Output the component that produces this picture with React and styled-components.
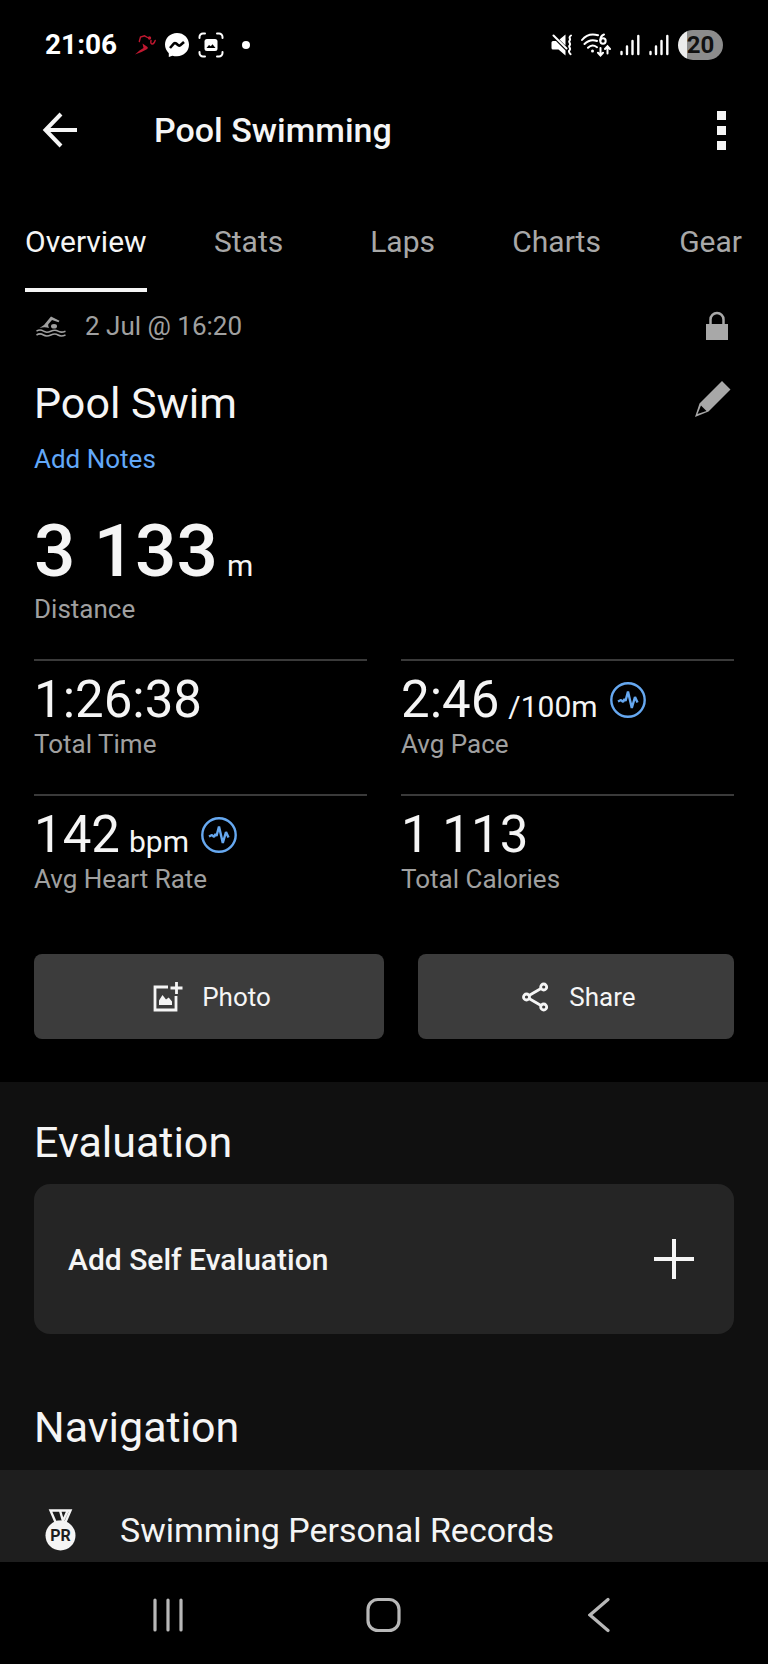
import React, { useState } from "react";
import styled, { createGlobalStyle } from "styled-components";

const GlobalStyle = createGlobalStyle`
  * {
    box-sizing: border-box;
  }

  body {
    margin: 0;
    background: #000;
    color: #f5f5f5;
    font-family: Roboto, "Liberation Sans", sans-serif;
  }

  button {
    padding: 0;
    border: none;
    background: none;
    color: inherit;
    font-family: inherit;
    cursor: pointer;
  }

  svg {
    display: block;
    flex: none;
  }
`;

const Screen = styled.div`
  display: flex;
  flex-direction: column;
  height: 100vh;
`;

const StatusBar = styled.div`
  display: flex;
  flex: none;
  align-items: center;
  justify-content: space-between;
  height: 90px;
  padding: 0 45px;
`;

const StatusGroup = styled.div`
  display: flex;
  align-items: center;
  gap: 9px;
`;

const Clock = styled.span`
  margin-right: 8px;
  font-size: 28px;
  font-weight: 700;
  line-height: 32px;
  color: #fff;
`;

const Dot = styled.span`
  width: 8px;
  height: 8px;
  margin-left: 9px;
  border-radius: 50%;
  background: #fff;
`;

const Battery = styled.span`
  width: 45px;
  height: 30px;
  border-radius: 15px;
  background: linear-gradient(to right, #ececec 20%, #8c8c8c 20%);
  color: #111;
  font-size: 24px;
  font-weight: 700;
  line-height: 30px;
  text-align: center;
`;

const AppBar = styled.header`
  display: flex;
  flex: none;
  align-items: center;
  height: 80px;
  padding: 0 41px 0 42px;
`;

const AppTitle = styled.h1`
  flex: 1;
  margin: 0 0 0 76px;
  font-size: 34px;
  font-weight: 500;
  line-height: 40px;
`;

const Tabs = styled.nav`
  display: flex;
  flex: none;
  height: 122px;
  padding-top: 26px;
  overflow: hidden;
`;

const Tab = styled.button`
  flex: none;
  min-width: 154px;
  padding: 0 25px;
  font-size: 30px;
  color: ${(props) => (props.$active ? "#f5f5f5" : "#a8a8a8")};
`;

const TabLabel = styled.span`
  display: inline-block;
  border-bottom: 4px solid ${(props) => (props.$active ? "#f5f5f5" : "transparent")};
  line-height: 92px;
`;

const Content = styled.main`
  flex: 1;
  min-height: 0;
  overflow: auto;
  scrollbar-width: none;
`;

const Summary = styled.section`
  padding: 14px 34px 43px;
`;

const Row = styled.div`
  display: flex;
  align-items: center;
  justify-content: space-between;
`;

const DateText = styled.div`
  display: flex;
  align-items: center;
  gap: 19px;
  padding-left: 2px;
  font-size: 26px;
  line-height: 40px;
  color: #a0a0a0;
`;

const TitleRow = styled(Row)`
  margin-top: 17px;
`;

const IconButton = styled.button`
  padding: 0 ${(props) => props.$inset || 0}px;
`;

const ActivityName = styled.h2`
  margin: 0;
  padding-top: 8px;
  font-size: 43px;
  font-weight: 400;
  line-height: 64px;
`;

const NotesLink = styled.a`
  display: block;
  width: max-content;
  margin-top: 8px;
  font-size: 26px;
  line-height: 32px;
  color: #62a8f8;
  text-decoration: none;
`;

const Stats = styled.dl`
  display: grid;
  grid-template-columns: 1fr 1fr;
  gap: 34px;
  margin: 0;
`;

const Stat = styled.div`
  display: flex;
  flex-direction: column-reverse;
  border-top: 2px solid #3a3a3a;
  padding-top: 11px;
`;

const MainStat = styled(Stat)`
  grid-column: 1 / -1;
  padding-top: 34px;
  border-top: none;
`;

const StatLabel = styled.dt`
  font-size: 26px;
  line-height: 32px;
  color: #a0a0a0;
`;

const StatValue = styled.dd`
  display: flex;
  align-items: baseline;
  height: ${(props) => (props.$main ? 84 : 56)}px;
  margin: 0;
  font-size: ${(props) => (props.$main ? 73 : 51)}px;
  font-weight: ${(props) => (props.$main ? 500 : 400)};
  line-height: ${(props) => (props.$main ? 84 : 56)}px;

  svg {
    align-self: center;
  }
`;

const Unit = styled.span`
  margin: 0 12px 0 9px;
  font-size: 30px;
  font-weight: 400;
  line-height: 32px;
`;

const Actions = styled.div`
  display: grid;
  grid-template-columns: 1fr 1fr;
  margin-top: 59px;
`;

const ActionButton = styled.button`
  display: flex;
  align-items: center;
  justify-content: center;
  gap: 19px;
  height: 85px;
  padding-left: 6px;
  border-radius: 8px;
  background: #3c3c3c;
  font-size: 26px;
  line-height: 32px;

  & + & {
    margin-left: 34px;
  }
`;

const Details = styled.section`
  padding-top: 28px;
  background: #101010;
`;

const SectionTitle = styled.h2`
  margin: 0;
  padding: 0 34px;
  font-size: 43px;
  font-weight: 400;
  line-height: 64px;
`;

const EvaluationCard = styled.button`
  display: flex;
  align-items: center;
  justify-content: space-between;
  width: calc(100% - 68px);
  height: 150px;
  margin: 10px 34px 61px;
  padding: 0 40px 0 34px;
  border-radius: 16px;
  background: #252525;
  font-size: 30px;
  font-weight: 500;
`;

const RecordsLink = styled.a`
  display: flex;
  align-items: center;
  gap: 44px;
  height: 120px;
  margin-top: 11px;
  padding: 0 45px;
  background: #1e1e1e;
  color: #f5f5f5;
  font-size: 34px;
  line-height: 40px;
  text-decoration: none;
`;

const SystemNav = styled.nav`
  display: grid;
  flex: none;
  grid-template-columns: repeat(3, 1fr);
  height: 102px;
  padding: 4px 8% 0;
`;

const SystemButton = styled.button`
  display: flex;
  align-items: center;
  justify-content: center;
`;

const RunnerIcon = () => (
  <svg width="22" height="22" viewBox="0 0 22 22" fill="#c01830">
    <path
      d="M5.300 7.500 6.500 3l4-1.200 3 1.700M17 6.500c-.5 2.500 0 3.500 1.500 3.500s2-1.500 2.700-3.500"
      fill="none"
      stroke="#c01830"
      strokeWidth="1.400"
      strokeLinecap="round"
    />
    <circle cx="15.500" cy="4" r="1.700" />
    <path d="m8.500 9.500 5 3.500c.6.700.2 1.700-.7 2.300L7.500 18 1 20.500l4.500-4 4-2.500Z" />
  </svg>
);

const MessengerIcon = () => (
  <svg width="24" height="24" viewBox="0 0 24 24">
    <path
      fill="#fff"
      d="M12 0C5.200 0 0 5 0 11.600c0 3.500 1.400 6.500 3.800 8.600V24l3.600-1.300c1.400.4 3 .6 4.600.6 6.800 0 12-5 12-11.700S18.800 0 12 0Z"
    />
    <path fill="none" stroke="#000" strokeWidth="2.600" d="m5 15 4-4.500c.6-.6 1.300-.6 2-.1l2.300 1.900c.7.500 1.300.5 2 0L19 9" />
  </svg>
);

const CaptureIcon = () => (
  <svg width="26" height="26" viewBox="0 0 26 26" fill="none" stroke="#fff" strokeWidth="2" strokeLinecap="round">
    <path d="M1.500 6V5a3.500 3.500 0 0 1 3.500-3.500h2M19 1.500h2A3.500 3.500 0 0 1 24.500 5v1M24.500 20v1a3.500 3.500 0 0 1-3.500 3.500h-2M7 24.500H5A3.500 3.500 0 0 1 1.500 21v-1" />
    <rect x="6.500" y="7" width="13" height="12" rx="2.500" fill="#fff" stroke="none" />
    <path d="m8.500 16 2.500-3 1.800 1.200 1.700-2 3 3.800Z" fill="#000" stroke="none" />
  </svg>
);

const MuteIcon = () => (
  <svg width="21" height="22" viewBox="0 0 21 22" fill="#fff">
    <path d="M2 7h3l9.500 9.500v5L7.500 15.500H2A1.500 1.500 0 0 1 .5 14V8.500A1.500 1.500 0 0 1 2 7ZM8.500 5.500l6-5v11Z" />
    <path
      d="m2.500 1.500 13 13M20 1.500c-3.500 2 .5 3.300-1.500 5.300-1.500 1.300 2 2.700 0 4.700-1.500 1.300 2 2.700 0 4.700-1.500 1.300 0 2.800 1 4"
      fill="none"
      stroke="#fff"
      strokeWidth="2"
      strokeLinecap="round"
    />
  </svg>
);

const WifiIcon = () => (
  <svg width="30" height="24" viewBox="1 0 30 24" fill="none" stroke="#fff" strokeWidth="2" strokeLinecap="round">
    <path d="M2 7C6 2 12 .5 18 2.200M4.500 11c4-4 8.500-4.500 12.500-3M8 14.700c2.500-2.500 6-2.700 9-.5" />
    <circle cx="12.500" cy="18" r="1.500" fill="#fff" stroke="none" />
    <circle cx="23" cy="8" r="2.700" />
    <path d="M24 1.500c-2.500 1-3.700 3.500-3.700 6M20.500 15v7M18 19.800l2.500 2.700 2.500-2.700M27.500 20.500v-7M25 16l2.500-2.700L30 16" />
  </svg>
);

const SignalIcon = () => (
  <svg width="20" height="22" viewBox="0 0 20 22" stroke="#fff" strokeWidth="2.400" strokeLinecap="round">
    <path d="M1.500 18v2M7 12.500V20M12.500 7v13M18.300 2v18" />
  </svg>
);

const BackIcon = () => (
  <svg width="36" height="36" viewBox="0 0 36 36" fill="none" stroke="#f5f5f5" strokeWidth="4">
    <path d="M19 2 3.500 18 19 34M3.500 18H35" />
  </svg>
);

const MoreIcon = () => (
  <svg width="12" height="39" viewBox="0 0 12 39" fill="#f5f5f5">
    <path d="M2 0h9v9H2zM2 15h9v9H2zM2 30h9v9H2z" />
  </svg>
);

const SwimIcon = () => (
  <svg width="30" height="22" viewBox="0 0 30 22" fill="#a0a0a0">
    <path d="M3.500 13 8 10l7-8.500 8.500 4.300-1 1.500-6.500-2.300-3.500 4c-.8 1 0 2.500.5 4-3-1-6-1-9.500 0Z" />
    <ellipse cx="18" cy="11.200" rx="3" ry="2.300" />
    <path
      d="M.5 16.200c2.500-1.600 4.500-1.600 7 0s5 1 7.300 0 4.700-1.600 7.200 0 5 1 7.500 0M.5 20c2.500-1.600 4.500-1.600 7 0s5 1 7.300 0 4.700-1.600 7.200 0 5 1 7.500 0"
      fill="none"
      stroke="#a0a0a0"
      strokeWidth="1.500"
    />
  </svg>
);

const LockIcon = () => (
  <svg width="24" height="30" viewBox="0 0 24 30">
    <path d="M1 13h22v16H1z" fill="#a8a8a8" />
    <path d="M5.500 14V8.500a6.500 6.500 0 0 1 13 0V14" fill="none" stroke="#a8a8a8" strokeWidth="2.500" />
  </svg>
);

const PencilIcon = () => (
  <svg width="36" height="36" viewBox="0 0 36 36" fill="#a8a8a8" fillRule="evenodd">
    <path d="m27 0 8.500 8.500-22 22L0 36l4.500-13.500ZM6 24.500 2.500 33l9-3Z" />
  </svg>
);

const PulseIcon = () => (
  <svg width="36" height="36" viewBox="0 0 36 36" fill="none" stroke="#66a8f0" strokeWidth="2.400">
    <circle cx="18" cy="18" r="16.700" />
    <path d="m8 19.500 3-1.500 2 2 1.500-3 1 2L18 9.500l3.800 16.500 3.200-11 2.500 5.500" strokeLinejoin="bevel" />
  </svg>
);

const PhotoIcon = () => (
  <svg width="30" height="30" viewBox="0 0 30 30" fill="#f5f5f5">
    <path d="M15 5H2v23h21V14M23.500 0v12M17.500 6h12" fill="none" stroke="#f5f5f5" strokeWidth="2.800" />
    <path d="M6 23v-4.500l3.500-5.500 3.500 4.500 2.700-2L19 19.500V23Z" />
  </svg>
);

const ShareIcon = () => (
  <svg width="28" height="30" viewBox="0 0 28 30" fill="none" stroke="#f5f5f5" strokeWidth="2.800">
    <circle cx="4.500" cy="15" r="3" />
    <circle cx="21.700" cy="5" r="3" />
    <circle cx="21.700" cy="25" r="3" />
    <path d="m7 13.500 12-7M7 16.500l12 7" />
  </svg>
);

const PlusIcon = () => (
  <svg width="40" height="40" viewBox="0 0 40 40" stroke="#f5f5f5" strokeWidth="4">
    <path d="M20 0v40M0 20h40" />
  </svg>
);

const MedalIcon = () => (
  <svg width="31" height="42" viewBox="0 0 31 42">
    <path d="M5.500 1.500h20L20.500 13h-10ZM15 1.500 18 12M18 12l4.500-10" fill="none" stroke="#f5f5f5" strokeWidth="2.400" />
    <circle cx="15.500" cy="26.500" r="15" fill="#f5f5f5" />
    <text x="15.500" y="32" textAnchor="middle" fontSize="16" fontWeight="700" fill="#1e1e1e">
      PR
    </text>
  </svg>
);

const tabs = ["Overview", "Stats", "Laps", "Charts", "Gear"];

const stats = [
  { label: "Distance", value: "3 133", unit: "m", main: true },
  { label: "Total Time", value: "1:26:38" },
  { label: "Avg Pace", value: "2:46", unit: "/100m", zones: true },
  { label: "Avg Heart Rate", value: "142", unit: "bpm", zones: true },
  { label: "Total Calories", value: "1 113" },
];

const App = () => {
  const [activeTab, setActiveTab] = useState("Overview");

  return (
    <Screen>
      <GlobalStyle />
      <StatusBar>
        <StatusGroup>
          <Clock>21:06</Clock>
          <RunnerIcon />
          <MessengerIcon />
          <CaptureIcon />
          <Dot />
        </StatusGroup>
        <StatusGroup>
          <MuteIcon />
          <WifiIcon />
          <SignalIcon />
          <SignalIcon />
          <Battery>20</Battery>
        </StatusGroup>
      </StatusBar>

      <AppBar>
        <IconButton aria-label="Back">
          <BackIcon />
        </IconButton>
        <AppTitle>Pool Swimming</AppTitle>
        <IconButton aria-label="More options">
          <MoreIcon />
        </IconButton>
      </AppBar>

      <Tabs>
        {tabs.map((tab) => (
          <Tab key={tab} $active={tab === activeTab} onClick={() => setActiveTab(tab)}>
            <TabLabel $active={tab === activeTab}>{tab}</TabLabel>
          </Tab>
        ))}
      </Tabs>

      <Content>
        <Summary>
          <Row>
            <DateText>
              <SwimIcon />
              2 Jul @ 16:20
            </DateText>
            <IconButton aria-label="Privacy" $inset={5}>
              <LockIcon />
            </IconButton>
          </Row>
          <TitleRow>
            <ActivityName>Pool Swim</ActivityName>
            <IconButton aria-label="Edit name" $inset={3}>
              <PencilIcon />
            </IconButton>
          </TitleRow>
          <NotesLink href="#notes">Add Notes</NotesLink>

          <Stats>
            {stats.map(({ label, value, unit, main, zones }) => {
              const Item = main ? MainStat : Stat;
              return (
                <Item key={label}>
                  <StatLabel>{label}</StatLabel>
                  <StatValue $main={main}>
                    {value}
                    {unit && <Unit>{unit}</Unit>}
                    {zones && <PulseIcon />}
                  </StatValue>
                </Item>
              );
            })}
          </Stats>

          <Actions>
            <ActionButton>
              <PhotoIcon />
              Photo
            </ActionButton>
            <ActionButton>
              <ShareIcon />
              Share
            </ActionButton>
          </Actions>
        </Summary>

        <Details>
          <SectionTitle>Evaluation</SectionTitle>
          <EvaluationCard>
            Add Self Evaluation
            <PlusIcon />
          </EvaluationCard>
          <SectionTitle>Navigation</SectionTitle>
          <RecordsLink href="#records">
            <MedalIcon />
            Swimming Personal Records
          </RecordsLink>
        </Details>
      </Content>

      <SystemNav>
        <SystemButton aria-label="Recent apps">
          <svg width="32" height="34" viewBox="0 0 32 34" stroke="#b8b8b8" strokeWidth="3.200" strokeLinecap="round">
            <path d="M2 2v30M15 2v30M28 2v30" />
          </svg>
        </SystemButton>
        <SystemButton aria-label="Home">
          <svg width="36" height="36" viewBox="0 0 36 36" fill="none" stroke="#b8b8b8" strokeWidth="3.200">
            <rect x="2" y="2.500" width="31" height="31" rx="10" />
          </svg>
        </SystemButton>
        <SystemButton aria-label="Go back">
          <svg width="22" height="36" viewBox="0 0 22 36" fill="none" stroke="#b8b8b8" strokeWidth="3.200" strokeLinecap="round">
            <path d="M20 2.500 2 18l18 15.500" />
          </svg>
        </SystemButton>
      </SystemNav>
    </Screen>
  );
};

export default App;
